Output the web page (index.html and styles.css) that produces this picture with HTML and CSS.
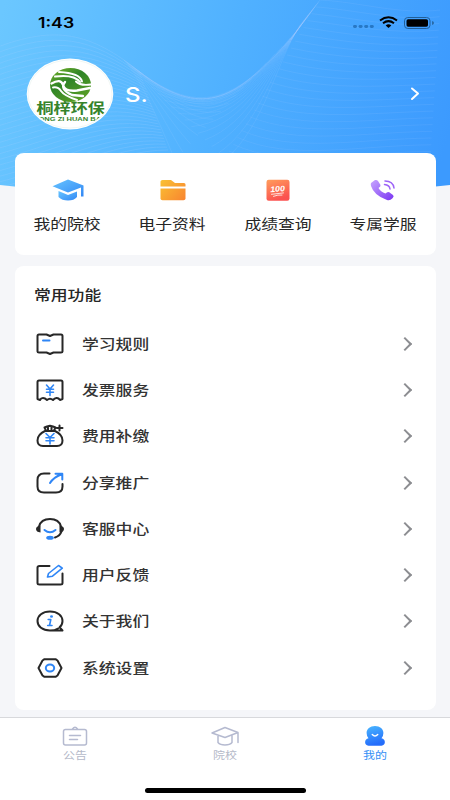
FILE: index.html
```html
<!DOCTYPE html>
<html lang="zh-CN">
<head>
<meta charset="utf-8">
<title>我的</title>
<link rel="stylesheet" href="styles.css">
</head>
<body>
<svg class="backdrop" viewBox="0 0 450 190" aria-hidden="true">
  <defs>
    <linearGradient id="sky" gradientUnits="userSpaceOnUse" x1="0" y1="20" x2="450" y2="130">
      <stop offset="0" stop-color="#6bc7ff"/><stop offset=".5" stop-color="#50b1ff"/><stop offset="1" stop-color="#3c9afe"/>
    </linearGradient>
    <clipPath id="dome"><path d="M0 0H450V185Q225 210 0 185Z"/></clipPath>
  </defs>
  <g clip-path="url(#dome)">
    <rect width="450" height="200" fill="url(#sky)"/>
    <g id="waves" fill="none" stroke="#a9d0ff" stroke-width=".6"></g>
  </g>
</svg>

<div class="status">
  <span class="clock">1:43</span>
  <svg class="signals" viewBox="0 0 84 14">
    <g fill="#1b65ad" opacity=".7"><rect x="1" y="9" width="4" height="3" rx="1.4"/><rect x="6.6" y="9" width="4" height="3" rx="1.4"/><rect x="12.2" y="9" width="4" height="3" rx="1.4"/><rect x="17.8" y="9" width="4" height="3" rx="1.4"/></g>
    <g fill="none" stroke="#000" stroke-width="2"><path d="M28 4.5Q36.5-2 45 4.5M31 7.2Q36.5 3 42 7.2"/></g>
    <path d="M33.7 9.4Q36.5 7 39.3 9.4L36.5 12Z"/>
    <rect x="52.5" y="1.5" width="25.5" height="11" rx="3.3" fill="none" stroke="#215f99" stroke-width="1"/>
    <rect x="54.5" y="3.3" width="21.5" height="7.4" rx="1.6"/>
    <path d="M80 5v4q2-.5 2-2t-2-2" fill="#286aa8"/>
  </svg>
</div>

<div class="profile">
  <svg class="avatar" viewBox="0 0 88 72">
    <defs>
      <clipPath id="oval"><ellipse cx="44" cy="36" rx="41" ry="34"/></clipPath>
      <linearGradient id="leaf" x1="0" y1="0" x2=".7" y2="1"><stop offset="0" stop-color="#7bb52a"/><stop offset=".45" stop-color="#2f8427"/><stop offset="1" stop-color="#5a9f25"/></linearGradient>
    </defs>
    <ellipse cx="44" cy="36" rx="43.3" ry="35.4" fill="#fff"/>
    <ellipse cx="44" cy="36" rx="42" ry="34" fill="none" stroke="#e7f2ec" stroke-width=".6"/>
    <ellipse cx="44.5" cy="27" rx="20.5" ry="17" fill="url(#leaf)"/>
    <g fill="none" stroke="#fff" stroke-linecap="round">
      <path stroke-width="2" d="M33 14Q54 15 56 23.5M29 18.5Q48 16 54 24"/>
      <path stroke-width="2.4" d="M25.5 25.5Q35 20 37 27T51 32.5L64 30M39 24Q33 31 46 37L57 38"/>
      <path stroke-width="2" d="M50 23.5Q54 28 65 26.5M27 29.5Q32 28.5 35 33T51 42"/>
    </g>
    <g clip-path="url(#oval)" fill="#36832b">
      <text class="logo-cn" transform="translate(10.5 55.3) scale(1.24 1)">桐梓环保</text>
      <text class="logo-en" transform="translate(8 63) scale(1.3 1)">TONG ZI HUAN BAO</text>
    </g>
  </svg>
  <span class="name">S.</span>
  <svg class="go" viewBox="0 0 10 14"><path d="M2 1.5l6 5-6 5.5" fill="none" stroke="#fff" stroke-width="2" stroke-linecap="round" stroke-linejoin="round"/></svg>
</div>

<main>
  <section class="card shortcuts">
    <div class="shortcut">
      <svg viewBox="0 0 34 24"><defs><linearGradient id="cap" x1="0" y1="0" x2="1" y2="1"><stop offset="0" stop-color="#67c4ff"/><stop offset="1" stop-color="#3288f5"/></linearGradient></defs>
        <g fill="url(#cap)"><path d="M1.5 8.3L17 1.5 32.5 7.5V18.5H30V9.5L17 14.5Z"/><path d="M7.5 13L17 17 26 13.5V19Q23 22.5 17 22.5T7.5 19Z"/></g></svg>
      <span class="wide">我的院校</span>
    </div>
    <div class="shortcut">
      <svg viewBox="0 0 34 24"><defs><linearGradient id="folder" gradientUnits="userSpaceOnUse" x1="4" y1="2" x2="28" y2="24"><stop offset="0" stop-color="#f9c233"/><stop offset="1" stop-color="#f98430"/></linearGradient></defs>
        <g fill="url(#folder)"><path d="M4.5 8.6V3.5Q4.5 2 6.5 2H15L19 5H28Q29.5 5 29.5 6.5V8.6Z"/><path d="M4.5 10.5H29.5V20.5Q29.5 22.2 27.5 22.2H6.5Q4.5 22.2 4.5 20.5Z"/></g></svg>
      <span class="wide">电子资料</span>
    </div>
    <div class="shortcut">
      <svg viewBox="0 0 34 24"><defs><linearGradient id="score" x1="0" y1="0" x2=".4" y2="1"><stop offset="0" stop-color="#ff9d5b"/><stop offset="1" stop-color="#fb5150"/></linearGradient></defs>
        <rect x="5.5" y="1.8" width="23" height="21" rx="2.2" fill="url(#score)"/>
        <text class="hundred" transform="translate(9.5 14.3) rotate(-5) scale(1.1 1)">100</text>
        <path d="M10.5 16.3L22.5 14.9M12.5 18.3Q17 16.5 21 17" fill="none" stroke="#fff" stroke-width=".8" stroke-linecap="round"/></svg>
      <span class="wide">成绩查询</span>
    </div>
    <div class="shortcut">
      <svg viewBox="0 0 34 24"><defs><linearGradient id="call" x1="0" y1="0" x2="1" y2="1"><stop offset="0" stop-color="#c7a5ff"/><stop offset="1" stop-color="#7a35f2"/></linearGradient></defs>
        <path fill="url(#call)" d="M5 5L9 2Q11 1.5 12 3L14.5 7Q15 8.5 12.5 10Q14.5 13.5 19.5 15.5Q21.5 13.2 23.3 14.3L27 17Q28.5 18.5 26.5 20.3Q24 23 21 22Q8 17.5 5 8Q4.5 6 5 5Z"/>
        <path d="M19 3Q27 3 28 10M18.5 6.5Q23.5 7 24 11" fill="none" stroke="#9d63f7" stroke-width="1.5" stroke-linecap="round"/></svg>
      <span class="wide">专属学服</span>
    </div>
  </section>

  <section class="card menu">
    <h2><span class="wide">常用功能</span></h2>
    <ul>
      <li><svg class="icon" viewBox="0 0 30 24"><path d="M4 2.5H11.5L15 4 18.5 2.5H26Q27.5 2.5 27.5 4V19.5Q27.5 20.5 26 20.5H18.5L15 22 11.5 20.5H4Q2.5 20.5 2.5 19.5V4Q2.5 2.5 4 2.5Z"/><path class="blue" d="M8 8.5H14.5"/></svg><span class="wide">学习规则</span></li>
      <li><svg class="icon" viewBox="0 0 30 24"><path d="M2.5 21V4Q2.5 2.5 4 2.5H26Q27.5 2.5 27.5 4V21L25 22Q23.5 19.8 21.5 20T18 22Q15 19.5 12 22 10 20 8 20T5 22Z"/><path class="blue thin" d="M11.5 7L15 11 18.5 7M11.5 11.3H18.5M11.5 14.3H18.5M15 11V17.5"/></svg><span class="wide">发票服务</span></li>
      <li><svg class="icon" viewBox="0 0 30 24"><path d="M10 7Q2.5 10.5 2.5 16.5 2.5 22 8 22H22Q27.5 22 27.5 16.5 27.5 10.5 20 7ZM11 6.5L9.5 3.5 12 2.5 15 1.8 18 2.5 20.5 3.5 19 6.5M13 3.5V6M16.5 3.5V6M24.5 1.5V6.5M21.8 4H27.5"/><path class="blue thin" d="M11 9.5L15 13.5 19 9.5M11 13.8H19M11 16.8H19M15 13.5V20"/></svg><span class="wide">费用补缴</span></li>
      <li><svg class="icon" viewBox="0 0 30 24"><path d="M14.5 2.5H9Q2.5 2.5 2.5 9V15.5Q2.5 21.5 9 21.5H21Q27.5 21.5 27.5 15.5V13"/><path class="blue" d="M15 12Q18.5 6.5 26.5 3.3M20.5 2.8H27.3V8.5"/></svg><span class="wide">分享推广</span></li>
      <li><svg class="icon" viewBox="0 0 30 24"><path d="M4 9.5Q6 2 15 2T26 9.5M26.5 14.5Q25 19 20 20.5"/><path class="solid" d="M5.5 8.5V15.5Q1 15 1 12T5.5 8.5ZM24.5 8.5V15.5Q29 15 29 12T24.5 8.5Z"/><path class="blue" d="M9.5 13Q15 17.5 20.5 13"/><ellipse class="dot" cx="15" cy="20.8" rx="3.8" ry="2"/></svg><span class="wide">客服中心</span></li>
      <li><svg class="icon" viewBox="0 0 30 24"><path d="M14.5 3H4.5Q2.5 3 2.5 4.5V20Q2.5 21.5 4.5 21.5H25.5Q27.5 21.5 27.5 20V10.5"/><path class="blue thin" d="M12.5 14L13.5 10.5 23.5 2.5 27.3 5.2 17.5 13.2Z"/></svg><span class="wide">用户反馈</span></li>
      <li><svg class="icon" viewBox="0 0 30 24"><path d="M23 19.5Q20 21.5 15 21.5C7.5 21.5 2.5 17.5 2.5 12S7.5 2.5 15 2.5 27.5 6.5 27.5 12Q27.5 16 24.5 18.3L27.5 21.5H15"/><path class="blue thin" d="M13.2 10.5H15.8L14.5 16.5H17M12.7 16.5H15"/><ellipse class="dot" cx="16.5" cy="7.5" rx="1.5" ry="1.2"/></svg><span class="wide">关于我们</span></li>
      <li><svg class="icon" viewBox="0 0 30 24"><path d="M9.5 3.2H20.5L22.5 4.5 26.5 12 22.5 19.5 20.5 20.8H9.5L7.5 19.5 3.5 12 7.5 4.5Z"/><ellipse class="blue" cx="15" cy="12" rx="4.2" ry="3.5"/></svg><span class="wide">系统设置</span></li>
    </ul>
  </section>
</main>

<nav class="tabs">
  <div class="tab">
    <svg viewBox="0 0 30 22"><path d="M5.5 4.5H24.5Q26.5 4.5 26.5 6.5V18Q26.5 20 24.5 20H5.5Q3.5 20 3.5 18V6.5Q3.5 4.5 5.5 4.5ZM12.5 4Q15 .5 17.5 4M9.5 10.5H20.5M9.5 14.5H17.5"/></svg>
    <span>公告</span>
  </div>
  <div class="tab">
    <svg viewBox="0 0 30 22"><path d="M2 8L15 2.5 28 7.5 15 12.5ZM8 11V17.5Q10 20 15 20T22 17.5V11M28 7.5V17.5"/></svg>
    <span>院校</span>
  </div>
  <div class="tab active">
    <svg viewBox="0 0 30 22"><defs><linearGradient id="me" x1="0" y1="0" x2=".3" y2="1"><stop offset="0" stop-color="#4ab8ff"/><stop offset="1" stop-color="#256dfb"/></linearGradient></defs>
      <path class="person" d="M15 1C20 1 23.4 4 23.4 8Q23.4 11 21.5 13.3C26 14 26 20.5 21.5 20.7H8.5C4 20.5 4 14 8.5 13.3Q6.6 11 6.6 8C6.6 4 10 1 15 1Z"/><path class="smile" d="M12.3 9.5Q15 12.5 17.7 9.5"/></svg>
    <span>我的</span>
  </div>
</nav>
<div class="home-bar"></div>
<script src="script.js"></script>
</body>
</html>
```
FILE: styles.css
```css
* { box-sizing: border-box; }
body {
  position: relative;
  display: flex;
  flex-direction: column;
  width: 450px;
  height: 800px;
  margin: 0;
  overflow: hidden;
  background: #f5f6f9;
  color: #262626;
  font-family: "Noto Sans CJK SC", sans-serif;
  font-size: 14px;
}
svg { display: block; overflow: visible; }
.backdrop { position: absolute; z-index: -1; top: 0; left: 0; width: 450px; height: 190px; overflow: hidden; }

.status {
  display: flex;
  justify-content: space-between;
  align-items: center;
  height: 46px;
  padding: 0 14px 0 38px;
}
.clock {
  color: #000;
  font: 600 14.5px/20px Inter, sans-serif;
  transform: scaleX(1.22);
  transform-origin: left;
}
.signals { width: 84px; height: 14px; }

.profile { display: flex; align-items: center; height: 95px; padding: 0 30px 0 26px; }
.avatar { width: 88px; height: 72px; }
.logo-cn { font-size: 13.8px; font-weight: 700; }
.logo-en { font: 700 5.8px "Liberation Sans", sans-serif; }
.name {
  margin: 2px 0 0 11px;
  color: #fff;
  font: 500 20px/24px Inter, sans-serif;
  transform: scaleX(1.2);
  transform-origin: left;
}
.go { width: 10px; height: 14px; margin-left: auto; }

main { display: flex; flex-direction: column; gap: 10.5px; padding: 12px 14.5px 0 15px; }
.card { border-radius: 9px / 8px; background: #fff; }
.wide { display: block; width: 56px; line-height: 20px; transform: scaleX(1.2); transform-origin: left; }

.shortcuts { display: flex; height: 102px; }
.shortcut { display: flex; flex: 1; flex-direction: column; align-items: center; padding-top: 25px; }
.shortcut svg { width: 34px; height: 24px; margin-bottom: 11px; }
.shortcut .wide { margin-right: .4px; transform-origin: center; }
.hundred { fill: #fff; font: italic 700 8px "Liberation Sans", sans-serif; }

.menu { height: 444.5px; padding: 18px 20px 0 19.5px; }
h2 { margin: 0; font-size: 14px; font-weight: 500; }
h2 .wide { margin-left: -.5px; }
ul { margin: 17px 0 0; padding: 0; list-style: none; }
li { display: flex; align-items: center; height: 46.3px; }
li .wide { margin-top: -2px; color: #333; font-weight: 500; }
li::after {
  content: "";
  width: 8px;
  height: 8px;
  margin: 0 6px 0 auto;
  border: solid #8c8d91;
  border-width: 2px 2px 0 0;
  transform: rotate(45deg);
}
.icon {
  width: 30px;
  height: 24px;
  margin-right: 17.5px;
  fill: none;
  stroke: #272727;
  stroke-width: 2;
  stroke-linecap: round;
  stroke-linejoin: round;
}
.icon .blue { stroke: #2f86f6; }
.icon .thin { stroke-width: 1.6; }
.icon .solid { fill: #272727; stroke: none; }
.icon .dot { fill: #2f86f6; stroke: none; }

.tabs { display: flex; height: 83px; margin-top: 7px; border-top: 1px solid #d8d9dc; background: #fff; }
.tab { display: flex; flex: 1; flex-direction: column; align-items: center; padding-top: 7px; color: #b5bac9; font-size: 10px; }
.tab svg { width: 30px; height: 22px; fill: none; stroke: #b5bad0; stroke-width: 1.5; stroke-linecap: round; stroke-linejoin: round; }
.tab span { line-height: 16px; transform: scaleX(1.2); }
.tab.active { color: #3590f5; }
.tab .person { fill: url(#me); stroke: none; }
.tab .smile { stroke: #fff; }
.home-bar { position: absolute; left: 145px; bottom: 7.5px; width: 161px; height: 5px; border-radius: 3px; background: #000; }
```
FILE: script.js
```js
// Each ribbon is a family of cubic curves blended between two outer edges.
const ribbons = [
  { from: [-5, 48, 55, 25, 90, 32, 140, 72], to: [-5, 200, 60, 185, 110, 150, 168, 150], count: 28, alpha: .34 },
  { from: [124, 60, 142, 80, 158, 120, 175, 160], to: [140, 72, 190, 110, 230, 115, 290, 38], count: 16, alpha: .22 },
  { from: [300, 25, 275, 65, 265, 125, 225, 160], to: [320, 0, 230, 125, 190, 112, 124, 60], count: 16, alpha: .22 },
  { from: [320, 0, 360, 2, 400, 15, 440, 10], to: [225, 158, 280, 185, 350, 165, 430, 165], count: 24, alpha: .2 }
];
const group = document.getElementById("waves");
for (const { from, to, count, alpha } of ribbons) {
  for (let i = 0; i < count; i++) {
    const t = i / (count - 1);
    const p = from.map((v, k) => (v + (to[k] - v) * t).toFixed(1));
    const path = document.createElementNS("http://www.w3.org/2000/svg", "path");
    path.setAttribute("d", `M${p[0]} ${p[1]}C${p.slice(2, 8).join(" ")}`);
    path.setAttribute("stroke-opacity", alpha);
    group.appendChild(path);
  }
}
```
